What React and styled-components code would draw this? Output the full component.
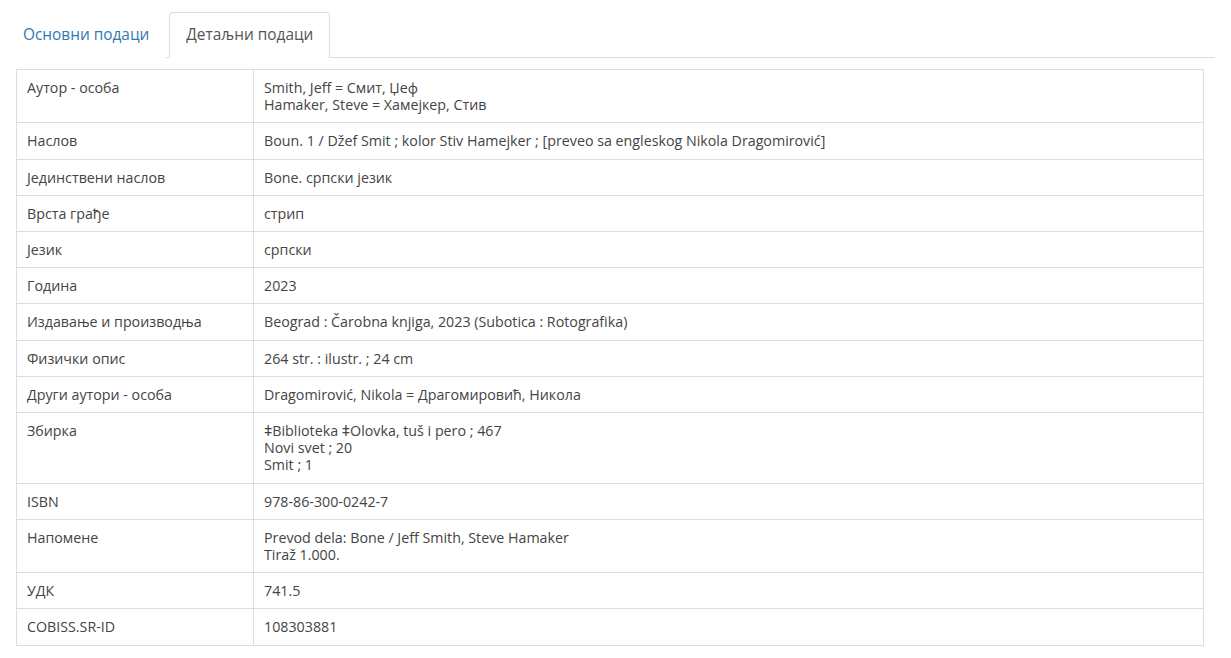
import React from 'react';
import styled, { createGlobalStyle } from 'styled-components';

const GlobalStyle = createGlobalStyle`
  body {
    margin: 0;
    background: #fff;
    font-family: "Open Sans", "Liberation Sans", sans-serif;
    color: #444;
  }
`;

const Page = styled.div`
  padding: 12px 16px 0 6px;
`;

const TabBar = styled.ul`
  display: flex;
  list-style: none;
  margin: 0;
  padding: 0;
  border-bottom: 1px solid #ddd;
`;

const Tab = styled.li`
  margin: 0 3px -1px 0;
  padding: 11px 16px 12px;
  font-size: 15.4px;
  line-height: 21px;
  border: 1px solid ${({ $active }) => ($active ? '#ddd' : 'transparent')};
  border-bottom-color: ${({ $active }) => ($active ? '#fff' : 'transparent')};
  border-radius: 4px 4px 0 0;
  background: #fff;
  color: ${({ $active }) => ($active ? '#555' : '#2f7ab4')};
  cursor: pointer;
`;

const Content = styled.div`
  padding: 11px 11px 0 10px;
`;

const Table = styled.table`
  width: 100%;
  border-collapse: collapse;
  font-size: 14.25px;
  line-height: 17.2px;
`;

const Cell = styled.td`
  border: 1px solid #ddd;
  padding: 9px 10px 9px;
  vertical-align: top;
  width: ${({ $label }) => ($label ? '216px' : 'auto')};
`;

const rows = [
  ['Аутор - особа', ['Smith, Jeff = Смит, Џеф', 'Hamaker, Steve = Хамејкер, Стив']],
  ['Наслов', ['Boun. 1 / Džef Smit ; kolor Stiv Hamejker ; [preveo sa engleskog Nikola Dragomirović]']],
  ['Јединствени наслов', ['Bone. српски језик']],
  ['Врста грађе', ['стрип']],
  ['Језик', ['српски']],
  ['Година', ['2023']],
  ['Издавање и производња', ['Beograd : Čarobna knjiga, 2023 (Subotica : Rotografika)']],
  ['Физички опис', ['264 str. : ilustr. ; 24 cm']],
  ['Други аутори - особа', ['Dragomirović, Nikola = Драгомировић, Никола']],
  ['Збирка', ['ǂBiblioteka ǂOlovka, tuš i pero ; 467', 'Novi svet ; 20', 'Smit ; 1']],
  ['ISBN', ['978-86-300-0242-7']],
  ['Напомене', ['Prevod dela: Bone / Jeff Smith, Steve Hamaker', 'Tiraž 1.000.']],
  ['УДК', ['741.5']],
  ['COBISS.SR-ID', ['108303881']],
];

export default function App() {
  return (
    <Page>
      <GlobalStyle />
      <TabBar>
        <Tab>Основни подаци</Tab>
        <Tab $active>Детаљни подаци</Tab>
      </TabBar>
      <Content>
        <Table>
          <tbody>
            {rows.map(([label, lines]) => (
              <tr key={label}>
                <Cell $label>{label}</Cell>
                <Cell>
                  {lines.map((l, i) => (
                    <div key={i}>{l}</div>
                  ))}
                </Cell>
              </tr>
            ))}
          </tbody>
        </Table>
      </Content>
    </Page>
  );
}
